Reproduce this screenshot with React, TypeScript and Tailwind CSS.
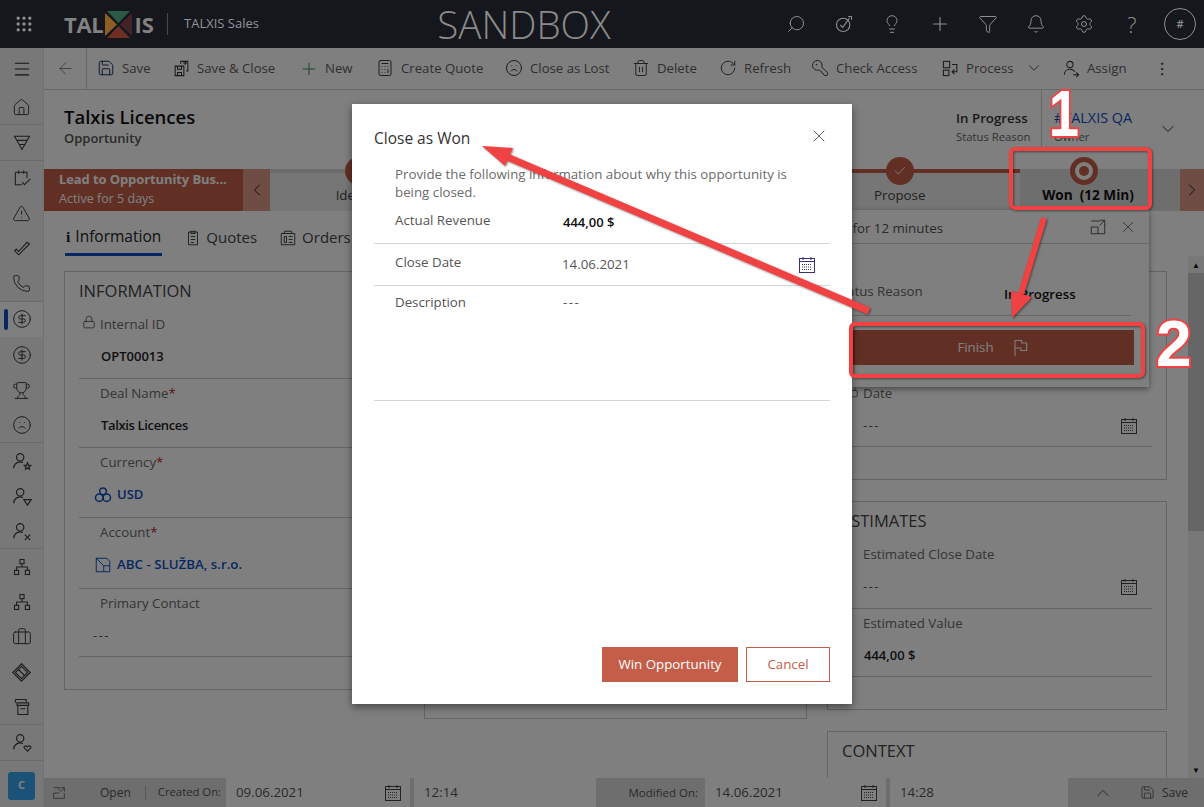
import React from "react";
import {
  Grip, Menu, ArrowLeft, Plus, Calculator, Frown, Trash2, RotateCw, EllipsisVertical, ChevronDown, ChevronLeft, ChevronRight, ChevronUp,
  House, TriangleAlert, Phone, CircleDollarSign, Trophy, Briefcase, Lock, X, Check, Search, Lightbulb, Bell, Settings, Funnel, Save, KeyRound,
} from "lucide-react";

const S = ({ size = 20, children, className = "" }: { size?: number; children: React.ReactNode; className?: string }) => (
  <svg width={size} height={size} viewBox="0 0 24 24" fill="none" stroke="currentColor" strokeWidth={1.3} className={"shrink-0 " + className}>
    {children}
  </svg>
);

const CalendarIcon = ({ className = "" }: { className?: string }) => (
  <svg width="18" height="18" viewBox="0 0 18 18" fill="none" stroke="currentColor" className={"shrink-0 " + className}>
    <rect x="1.5" y="2.5" width="15" height="14" />
    <path d="M1.5 5.5h15M5 1v3M13 1v3" />
    <path d="M4 8.5h10M4 11h10M4 13.5h10" strokeDasharray="1 1" />
  </svg>
);

const PersonBadge = ({ badge }: { badge: React.ReactNode }) => (
  <S size={22}>
    <circle cx="10" cy="8" r="4" />
    <path d="M3 20c0-4 3-7 7-7 1 0 2 .2 3 .6" />
    {badge}
  </S>
);

const Hier = () => (
  <S size={20}>
    <rect x="9.5" y="3" width="5" height="5" />
    <rect x="3" y="16" width="5" height="5" />
    <rect x="16" y="16" width="5" height="5" />
    <path d="M12 8v4M5.5 16v-4h13v4" />
  </S>
);

const Side = ({ children, selected, divider }: { children: React.ReactNode; selected?: boolean; divider?: boolean }) => (
  <div className={"relative h-[35.3px] flex items-center justify-center text-[#3a3a3a] " + (selected ? "bg-white " : "") + (divider ? "border-b border-[#d5d5d5]" : "")}>
    {selected && <div className="absolute left-[4px] top-[7px] w-[4px] h-[21px] rounded-sm bg-[#0f4fc4]" />}
    {children}
  </div>
);

const Cmd = ({ icon, label, className, after }: { icon: React.ReactNode; label?: string; className: string; after?: React.ReactNode }) => (
  <div className={"flex items-center gap-[6px] text-[#5e5e5e] text-[13.2px] " + className}>
    <span className="flex items-center justify-center w-[20px] text-[#333]">{icon}</span>
    {label && <span className="whitespace-nowrap">{label}</span>}
    {after}
  </div>
);

const Field = ({ label, req, lock, rowH, children }: { label: string; req?: boolean; lock?: boolean; rowH: string; children: React.ReactNode }) => (
  <div className={"border-b border-[#c8c8c8] " + rowH}>
    <div className="h-[30px] flex items-center pl-[21px] text-[13.3px] text-[#6a6a6a] relative">
      {lock && <Lock size={14} strokeWidth={1.3} className="absolute left-[3px] top-[5px] text-[#444]" />}
      {label}
      {req && <span className="text-[#b3251f]">*</span>}
    </div>
    {children}
  </div>
);

const Value = ({ children, className = "" }: { children: React.ReactNode; className?: string }) => (
  <div className={"h-[34px] flex items-center pl-[22px] text-[13px] font-semibold text-[#1d1d1d] " + className}>{children}</div>
);

const Empty = ({ cal }: { cal?: boolean }) => (
  <div className="h-[34px] flex items-center justify-between pl-[21px] pr-[14px] text-[#555] tracking-[1.5px] text-[13px]">
    <span>---</span>
    {cal && <CalendarIcon className="text-[#444]" />}
  </div>
);

const Card = ({ title, className, children }: { title?: string; className: string; children?: React.ReactNode }) => (
  <div className={"border border-[#c9c9c9] bg-white px-[14px] " + className}>
    <div className="h-[38px] pt-[7px] text-[16.5px] leading-[24px] text-[#444]">{title}</div>
    {children}
  </div>
);

const Stage = ({ name, current }: { name?: string; current?: boolean }) => (
  <div className="flex flex-col items-center">
    {current ? (
      <div className="-mt-[12px] w-[28px] h-[28px] rounded-full bg-white border-[5px] border-[#c55f49] flex items-center justify-center">
        <div className="w-[10px] h-[10px] rounded-full bg-[#c55f49]" />
      </div>
    ) : (
      <div className="-mt-[12px] w-[28px] h-[28px] rounded-full bg-[#c55f49] flex items-center justify-center text-white">
        <Check size={14} strokeWidth={1.5} />
      </div>
    )}
    {name && <div className={"-mt-[1px] leading-[22px] whitespace-pre " + (current ? "text-[13.6px] font-bold text-[#111] pl-[8px]" : "text-[13.3px] text-[#444]")}>{name}</div>}
  </div>
);

const BoxInput = ({ value, w, cal }: { value: string; w: string; cal?: boolean }) => (
  <div className={"h-full bg-white flex items-center justify-between pl-[10px] pr-[8px] text-[13.3px] text-[#555] " + w}>
    <span>{value}</span>
    {cal && <CalendarIcon className="text-[#444]" />}
  </div>
);

const Top = ({ children }: { children: React.ReactNode }) => <span className="w-[48px] flex justify-center">{children}</span>;

export default function App() {
  return (
    <div className="relative w-[1204px] h-[807px] overflow-hidden flex flex-col bg-white font-['Open_Sans','Noto_Sans',sans-serif]">
      {/* top bar */}
      <header className="relative z-30 h-[48px] shrink-0 bg-[#15171c] flex items-center text-[#8f8f8f]">
        <div className="w-[47px] flex justify-center"><Grip size={20} strokeWidth={2} /></div>
        <div className="ml-[17px] flex items-center text-[22px] font-bold text-[#828282] w-[103px] whitespace-nowrap">
          <span className="tracking-[-0.3px]">TAL</span>
          <svg width="29" height="29" viewBox="0 0 29 29" className="shrink-0 mx-[1px]">
            <polygon points="3,1 26,1 14.500,13" fill="#2c5a47" />
            <polygon points="1,3 13,14.500 1,26" fill="#8e5f22" />
            <polygon points="28,3 16,14.500 28,26" fill="#44222a" />
            <polygon points="3,28 26,28 14.500,16" fill="#6d2f24" />
          </svg>
          <span>IS</span>
        </div>
        <div className="w-px h-[22px] bg-[#44474e]" />
        <div className="ml-[16px] text-[13px] text-[#8f959d] w-[130px]">TALXIS Sales</div>
        <div className="ml-[120px] text-[38.500px] font-light text-[#8b8b8b] w-[180px] text-center leading-none whitespace-nowrap">SANDBOX</div>
        <div className="ml-[158px] flex items-center">
          <Top><Search size={20} strokeWidth={1.2} className="-scale-x-100" /></Top>
          <Top><S size={20}><circle cx="11" cy="13" r="8" /><path d="M7.5 13l3 3 8-11M17 3h4v4" /></S></Top>
          <Top><Lightbulb size={20} strokeWidth={1.2} /></Top>
          <Top><Plus size={22} strokeWidth={1.2} /></Top>
          <Top><Funnel size={20} strokeWidth={1.2} /></Top>
          <Top><Bell size={20} strokeWidth={1.2} /></Top>
          <Top><Settings size={20} strokeWidth={1.2} /></Top>
          <Top><span className="text-[22px] font-light leading-none">?</span></Top>
          <span className="ml-[8px] w-[32px] h-[32px] rounded-full border border-[#8f8f8f] flex items-center justify-center text-[11px] font-semibold">#</span>
        </div>
      </header>

      <div className="flex-1 flex min-h-0">
        {/* sidebar */}
        <aside className="w-[44px] shrink-0 bg-[#f1f1f1] border-r border-[#e2e2e2] flex flex-col">
          <div className="h-[42px] flex items-center justify-center text-[#222]"><Menu size={20} strokeWidth={1.3} /></div>
          <div>
            <Side divider><House size={19} strokeWidth={1.2} /></Side>
            <Side divider><S size={20}><path d="M3 5h18l-9 16zM5.500 10h13M8 15h8" /></S></Side>
            <Side><S size={20}><path d="M4 5h14v7M4 5v15h8M8 3v4M14 3v4M12 17l3 3 7-7" /></S></Side>
            <Side><TriangleAlert size={19} strokeWidth={1.2} /></Side>
            <Side><S size={20}><path d="M3 14l5 5L21 6l-3-2-10 11-3-3z" /></S></Side>
            <Side divider><Phone size={19} strokeWidth={1.2} /></Side>
            <Side selected><CircleDollarSign size={20} strokeWidth={1.2} /></Side>
            <Side><CircleDollarSign size={20} strokeWidth={1.2} /></Side>
            <Side><Trophy size={19} strokeWidth={1.2} /></Side>
            <Side divider><Frown size={20} strokeWidth={1.2} /></Side>
            <Side><PersonBadge badge={<path d="M18 14l1 2.500 2.500.3-2 1.700.6 2.500-2.100-1.300-2.100 1.300.6-2.500-2-1.700 2.500-.3z" />} /></Side>
            <Side><PersonBadge badge={<path d="M14 16h8l-4 6z" />} /></Side>
            <Side divider><PersonBadge badge={<path d="M15 16l6 6M21 16l-6 6" />} /></Side>
            <Side><Hier /></Side>
            <Side><Hier /></Side>
            <Side><Briefcase size={20} strokeWidth={1.2} /></Side>
            <Side><S size={21}><path d="M12 2l10 10-10 10L2 12zM12 5l7 7-7 7-7-7zM8 8l8 8" /></S></Side>
            <Side divider><S size={20}><path d="M4 3h13v3M4 3v4M6 7h14v3H6zM7 10v11h12V10M10 14h6" /></S></Side>
            <Side divider><PersonBadge badge={<path d="M18 22l-3.500-3.500c-1-1.500 1-3.200 3.500-1.300 2.500-1.900 4.500-.2 3.500 1.300z" />} /></Side>
          </div>
          <div className="mt-[11px] ml-[8px] w-[27px] h-[28px] rounded-[3px] bg-[#36a6f0] text-white text-[11px] font-bold flex items-center justify-center">C</div>
        </aside>

        {/* main */}
        <main className="flex-1 min-w-0 flex flex-col relative">
          <div className="h-[42px] shrink-0 border-b border-[#d0d0d0] flex items-center text-[#555]">
            <div className="w-[43px] h-full border-r border-[#d0d0d0] flex items-center justify-center text-[#777]"><ArrowLeft size={19} strokeWidth={1.1} /></div>
            <Cmd className="ml-[9px] w-[106px]" icon={<Save size={18} strokeWidth={1.3} className="text-[#0c2f63]" />} label="Save" />
            <Cmd className="w-[116px] -ml-[31px]" icon={<S size={19}><path d="M4 9h11v12H4zM7 9v4h5V9M7 21v-4h5v4M11 6V3h9v12h-2M14 5h4M16 3l2 2-2 2" /></S>} label="Save & Close" />
            <Cmd className="ml-[12px] w-[76px]" icon={<Plus size={22} strokeWidth={1.1} className="text-[#2f7d4a]" />} label="New" />
            <Cmd className="w-[129px]" icon={<Calculator size={18} strokeWidth={1.3} />} label="Create Quote" />
            <Cmd className="w-[127px]" icon={<Frown size={18} strokeWidth={1.3} />} label="Close as Lost" />
            <Cmd className="w-[87px]" icon={<Trash2 size={18} strokeWidth={1.2} />} label="Delete" />
            <Cmd className="w-[92px]" icon={<RotateCw size={18} strokeWidth={1.2} />} label="Refresh" />
            <Cmd className="w-[130px]" icon={<KeyRound size={18} strokeWidth={1.2} className="-scale-x-100" />} label="Check Access" />
            <Cmd className="w-[121px]" icon={<S size={19}><rect x="3" y="3" width="8" height="8" /><rect x="3" y="14" width="7" height="7" /><path d="M14 7h6v9h-6M17 13l-3 3 3 3" /></S>} label="Process" after={<ChevronDown size={18} strokeWidth={1.1} className="ml-[5px] text-[#333]" />} />
            <Cmd className="w-[92px]" icon={<S size={19}><circle cx="10" cy="7" r="4" /><path d="M3 20c0-4 3-7 7-7s5 1 6 3M14 20h7M18 17l3 3-3 3" /></S>} label="Assign" />
            <EllipsisVertical size={18} strokeWidth={1.3} className="text-[#333]" />
          </div>

          <div className="h-[79px] shrink-0 flex pl-[20px] relative">
            <div className="pt-[14px] w-[880px]">
              <div className="text-[18.500px] leading-[26px] font-semibold text-[#111]">Talxis Licences</div>
              <div className="text-[13px] leading-[17px] font-semibold text-[#555]">Opportunity</div>
            </div>
            <div className="pt-[18px] pl-[12px] w-[98px] h-[58px] border-r border-[#d0d0d0] whitespace-nowrap">
              <div className="text-[13.3px] leading-[20px] font-semibold text-[#333]">In Progress</div>
              <div className="text-[11.3px] leading-[18px] text-[#666]">Status Reason</div>
            </div>
            <div className="pt-[18px] pl-[12px] w-[110px]">
              <div className="text-[14.400px] leading-[20px] font-medium text-[#0f4fc4] whitespace-nowrap">#TALXIS QA</div>
              <div className="text-[11.3px] leading-[18px] text-[#666]">Owner</div>
            </div>
            <ChevronDown size={20} strokeWidth={1.2} className="absolute left-[1114px] top-[29px] text-[#333]" />
          </div>

          {/* business process bar */}
          <div className="h-[42px] shrink-0 flex relative bg-[#ececec]">
            <div className="w-[199px] bg-[#c55f49] pl-[15px] pt-[1px] text-white">
              <div className="text-[13px] leading-[19px] font-bold whitespace-nowrap tracking-[-0.1px]">Lead to Opportunity Bus...</div>
              <div className="text-[12.500px] leading-[20px]">Active for 5 days</div>
            </div>
            <div className="w-[27px] bg-[#de9a8a] flex items-center justify-center text-[#222]"><ChevronLeft size={20} strokeWidth={1.2} /></div>
            <div className="flex-1 relative flex bg-[#ececec]">
              <div className="absolute left-0 right-0 top-0 h-[4px] bg-[#d8d8d8]" />
              <div className="absolute left-[89px] right-[96px] top-0 h-[4px] bg-[#c55f49]" />
              <div className="relative w-[178px] flex justify-center"><Stage name="Identify" /></div>
              <div className="relative w-[180px] flex justify-center"><Stage /></div>
              <div className="relative w-[180px] flex justify-center"><Stage /></div>
              <div className="relative w-[212px] flex justify-start pl-[66px]"><Stage name="Propose" /></div>
              <div className="relative flex-1 bg-[#dcdcdc] flex justify-center pr-[32px]"><Stage name="Won  (12 Min)" current /></div>
            </div>
            <div className="w-[24px] bg-[#de9a8a] flex items-center justify-center text-[#222]"><ChevronRight size={20} strokeWidth={1.2} /></div>
          </div>

          {/* tabs */}
          <div className="h-[45px] shrink-0 flex items-end pl-[21px] gap-[22px] text-[15px] text-[#444]">
            <div className="h-[34px] flex items-center gap-[5px] border-b-[3px] border-[#0f4fc4] text-[15.500px] font-medium text-[#222] whitespace-nowrap px-[1px] pb-[1px]"><span className="font-['Liberation_Serif',serif] font-bold">i</span>Information</div>
            <div className="h-[34px] flex items-center gap-[4px] pb-[3px]"><S size={18}><path d="M6 4h12v17H6zM9 3h6v3H9zM9 10h6M9 14h6M9 18h4" /></S>Quotes</div>
            <div className="h-[34px] flex items-center gap-[5px] pb-[3px]"><S size={18}><path d="M3 6h18v15H3zM7 3h10v3H7zM7 10h3v8H7zM13 10h5M13 14h5M13 18h5" /></S>Orders</div>
          </div>

          {/* content */}
          <div className="flex-1 min-h-0 overflow-hidden flex items-start pt-[15px] pl-[20px] relative">
            <Card title="INFORMATION" className="w-[342px] h-[419px] shrink-0">
              <Field label="Internal ID" lock rowH="h-[69px]"><Value>OPT00013</Value></Field>
              <Field label="Deal Name" req rowH="h-[69px]"><Value><span className="tracking-[-0.35px]">Talxis Licences</span></Value></Field>
              <Field label="Currency" req rowH="h-[70px]">
                <Value>
                  <span className="-ml-[7px] flex items-center gap-[5px] text-[#0f4fc4]">
                    <svg width="18" height="18" viewBox="0 0 24 24" fill="none" stroke="currentColor" strokeWidth={2} className="shrink-0"><circle cx="12" cy="7" r="4.500" /><circle cx="7" cy="15.500" r="5" /><circle cx="17" cy="15.500" r="5" /></svg>
                    USD
                  </span>
                </Value>
              </Field>
              <Field label="Account" req rowH="h-[71px]">
                <Value>
                  <span className="-ml-[7px] flex items-center gap-[5px] whitespace-nowrap text-[#0f4fc4] text-[13.3px]">
                    <S size={18}><path d="M3 3h14l4 4v14H3zM3 3l10 10h8M13 13v8" /></S>ABC - SLUŽBA, s.r.o.
                  </span>
                </Value>
              </Field>
              <Field label="Primary Contact" rowH="h-[68px]"><div className="-ml-[7px]"><Empty /></div></Field>
            </Card>
            <div className="ml-[18px] w-[383px] h-[448px] shrink-0 border border-[#c9c9c9] bg-white" />
            <div className="ml-[20px] w-[340px] shrink-0 flex flex-col gap-[21px]">
              <Card className="h-[209px]">
                <div className="h-[69px]" />
                <Field label="Date" lock rowH="h-[68px]"><Empty cal /></Field>
              </Card>
              <Card title="ESTIMATES" className="h-[209px]">
                <Field label="Estimated Close Date" rowH="h-[69px]"><Empty cal /></Field>
                <Field label="Estimated Value" rowH="h-[68px]"><Value>444,00 $</Value></Field>
              </Card>
              <Card title="CONTEXT" className="h-[200px]" />
            </div>
            <div className="ml-[21px] w-[16px] self-stretch -mt-[15px] flex flex-col items-center text-[#111] text-[8px] bg-[#f0f0f0]">
              <span className="h-[17px] flex items-center">▲</span>
              <div className="w-full h-[258px] bg-[#cdcdcd]" />
              <div className="flex-1" />
              <span className="h-[17px] flex items-center">▼</span>
            </div>
          </div>

          {/* footer */}
          <div className="h-[29px] shrink-0 bg-[#dcdcdc] flex items-center text-[11.500px] text-[#555] relative">
            <div className="h-full flex items-center pl-[7px] w-[182px] text-[12px]">
              <S size={16} className="text-[#666]"><path d="M20 12v8H4v-8M4 12h8M4 4h8v4M14 4h6v6M20 4l-7 7" /></S>
              <span className="ml-[33px]">Open</span>
              <span className="ml-[14px] h-[14px] w-px bg-[#aaa]" />
              <span className="ml-[12px] whitespace-nowrap text-[11.300px]">Created On:</span>
            </div>
            <BoxInput value="09.06.2021" w="w-[184px]" cal />
            <div className="h-full w-[4px]" />
            <BoxInput value="12:14" w="w-[182px]" />
            <div className="h-full w-[109px] flex items-center justify-end pr-[7px] whitespace-nowrap">Modified On:</div>
            <BoxInput value="14.06.2021" w="w-[181px]" cal />
            <div className="h-full w-[4px]" />
            <BoxInput value="14:28" w="w-[178px]" />
            <div className="flex-1 flex items-center pl-[25px] gap-[27px] text-[12px]">
              <ChevronUp size={20} strokeWidth={1.2} />
              <span className="flex items-center gap-[7px]"><Save size={15} strokeWidth={1.3} />Save</span>
            </div>
          </div>

          {/* flyout over content */}
          <div className="absolute left-[808px] top-[162px] w-[297px] h-[177px] z-10 bg-white shadow-[0_2px_6px_rgba(0,0,0,0.45)]">
            <div className="h-[34px] border-b border-[#d0d0d0] flex items-center pr-[12px] text-[13.3px] text-[#555]">
              <span className="flex-1 -ml-[40px] pt-[4px] whitespace-nowrap">Active for 12 minutes</span>
              <S size={18} className="mr-[12px]"><path d="M3 12h9v9H3zM3 4h12M21 8v13h-9M14 10l7-7M15 3h6v6" /></S>
              <X size={18} strokeWidth={1.1} />
            </div>
            <div className="h-[72px] mr-[18px] border-b border-[#d0d0d0] flex text-[13.3px] text-[#666] pt-[38px] whitespace-nowrap">
              <span className="w-[152px] -ml-[17px] shrink-0">Status Reason</span>
              <span className="font-semibold text-[#111] ml-[17px] pt-[3px]">In Progress</span>
            </div>
            <div className="mt-[14px] ml-[1px] w-[281px] h-[35px] bg-[#c55f49] flex items-center justify-center gap-[16px] text-[13.3px] text-white">
              <span>Finish</span>
              <S size={20}><path d="M6 22V3h8v3h6v9h-7v-3H6" /></S>
            </div>
          </div>
        </main>
      </div>

      {/* dim overlay */}
      <div className="absolute inset-0 z-20 bg-black/50" />

      {/* modal */}
      <section className="absolute left-[352px] top-[104px] w-[500px] h-[600px] z-30 bg-white shadow-[0_3px_8px_rgba(0,0,0,0.45)] flex flex-col px-[22px]">
        <div className="h-[62px] flex items-start justify-between pt-[22px]">
          <h1 className="text-[15.500px] leading-[24px] text-[#333]">Close as Won</h1>
          <X size={20} strokeWidth={1} className="text-[#444] mr-[1px]" />
        </div>
        <p className="pl-[21px] pr-[36px] -mt-[1px] text-[13.3px] leading-[18px] text-[#6b6b6b]">Provide the following information about why this opportunity is being closed.</p>
        <div className="h-[43px] border-b border-[#d5d5d5] flex text-[13.3px] pt-[10px]">
          <span className="w-[189px] pl-[21px] text-[#555]">Actual Revenue</span>
          <span className="font-semibold text-[13px] text-[#111] pt-[2px]">444,00 $</span>
        </div>
        <div className="h-[42px] border-b border-[#d5d5d5] flex items-center text-[13.3px]">
          <span className="w-[188px] pl-[21px] -mt-[3px] text-[#555]">Close Date</span>
          <span className="flex-1 text-[#555]">14.06.2021</span>
          <CalendarIcon className="text-[#3c2f6b] mr-[14px]" />
        </div>
        <div className="h-[115px] border-b border-[#d5d5d5] flex text-[13.3px] pt-[7px]">
          <span className="w-[189px] pl-[21px] text-[#555]">Description</span>
          <span className="text-[#555] tracking-[1.5px]">---</span>
        </div>
        <div className="flex-1 flex items-start justify-end gap-[8px] pt-[246px]">
          <button className="w-[136px] h-[35px] bg-[#c45e48] text-white text-[13.3px]">Win Opportunity</button>
          <button className="w-[84px] h-[35px] bg-white border border-[#c45e48] text-[#c45e48] text-[13.3px]">Cancel</button>
        </div>
      </section>

      {/* annotations */}
      <svg width="1204" height="807" viewBox="0 0 1204 807" className="absolute inset-0 z-40 pointer-events-none drop-shadow-[1px_1px_1px_rgba(0,0,0,0.45)]">
        <path d="M500 154L869 311" stroke="#f04242" strokeWidth="7" />
        <polygon points="482,146 513,148 505,166" fill="#f04242" />
        <path d="M1044 218L1021 294" stroke="#f04242" strokeWidth="6" />
        <polygon points="1012,318 1011,291 1032,297" fill="#f04242" />
        <rect x="1011" y="149" width="139" height="59" rx="4" fill="none" stroke="#f04242" strokeWidth="4" />
        <rect x="851" y="324" width="292" height="52" rx="4" fill="none" stroke="#f04242" strokeWidth="4" />
      </svg>
      <div className="absolute left-[1046px] top-[82px] z-40 scale-x-[0.85] text-[64px] leading-none font-bold font-['Liberation_Sans',sans-serif] text-white [-webkit-text-stroke:4px_#f04242] [paint-order:stroke_fill]">1</div>
      <div className="absolute left-[1156px] top-[312px] z-40 text-[64px] leading-none font-bold font-['Liberation_Sans',sans-serif] text-white [-webkit-text-stroke:4px_#f04242] [paint-order:stroke_fill]">2</div>
    </div>
  );
}
